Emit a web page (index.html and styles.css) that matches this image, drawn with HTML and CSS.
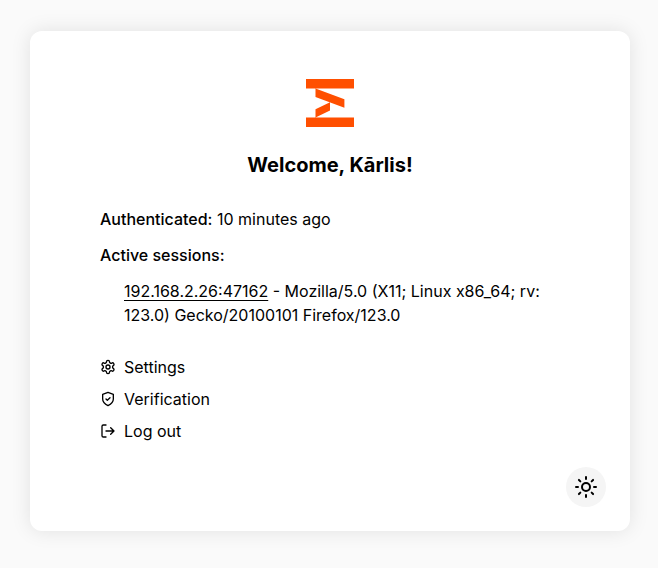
FILE: index.html
```html
<!DOCTYPE html>
<html lang="en">
<head>
<meta charset="utf-8">
<title>Welcome</title>
<link rel="stylesheet" href="styles.css">
</head>
<body>
<main class="card">
  <svg class="logo" viewBox="0 0 48 48" aria-hidden="true"><path d="M0 0H48V9.5H0ZM0 38.500H48V48H0ZM9.500 9.500L38.400 20.200V28.700L9.500 17.900ZM9.500 30.200L24 23.200V31.600L9.500 38.500Z"/></svg>
  <h1>Welcome, Kārlis!</h1>
  <section class="content">
    <p><strong>Authenticated:</strong> 10 minutes ago</p>
    <p><strong>Active sessions:</strong></p>
    <ul class="sessions"><li><a>192.168.2.26:47162</a> - Mozilla/5.0 (X11; Linux x86_64; rv:<br>123.0) Gecko/20100101 Firefox/123.0</li></ul>
    <nav class="links">
      <a><svg class="icon" viewBox="0 0 24 24"><path d="M12.220 2h-.440a2 2 0 0 0-2 2v.180a2 2 0 0 1-1 1.730l-.430.250a2 2 0 0 1-2 0l-.150-.080a2 2 0 0 0-2.730.730l-.220.380a2 2 0 0 0 .730 2.730l.150.100a2 2 0 0 1 1 1.720v.510a2 2 0 0 1-1 1.740l-.150.090a2 2 0 0 0-.730 2.730l.220.380a2 2 0 0 0 2.730.730l.150-.080a2 2 0 0 1 2 0l.430.250a2 2 0 0 1 1 1.730V20a2 2 0 0 0 2 2h.440a2 2 0 0 0 2-2v-.180a2 2 0 0 1 1-1.730l.430-.250a2 2 0 0 1 2 0l.150.080a2 2 0 0 0 2.730-.730l.220-.390a2 2 0 0 0-.730-2.730l-.150-.080a2 2 0 0 1-1-1.740v-.500a2 2 0 0 1 1-1.740l.150-.090a2 2 0 0 0 .730-2.730l-.220-.380a2 2 0 0 0-2.730-.730l-.150.080a2 2 0 0 1-2 0l-.430-.250a2 2 0 0 1-1-1.730V4a2 2 0 0 0-2-2z"/><circle cx="12" cy="12" r="3"/></svg>Settings</a>
      <a><svg class="icon" viewBox="0 0 24 24"><path d="M12 22s8-4 8-10V5l-8-3-8 3v7c0 6 8 10 8 10zM9 12l2 2 4-4"/></svg>Verification</a>
      <a><svg class="icon" viewBox="0 0 24 24"><path d="M9 21H5a2 2 0 0 1-2-2V5a2 2 0 0 1 2-2h4M16 17l5-5-5-5M21 12H9"/></svg>Log out</a>
    </nav>
  </section>
  <button class="theme" aria-label="Theme"><svg class="icon" viewBox="0 0 24 24"><circle cx="12" cy="12" r="4"/><path d="M12 2v2M12 20v2M4.930 4.930l1.410 1.410M17.660 17.660l1.410 1.410M2 12h2M20 12h2M6.340 17.660l-1.410 1.410M19.070 4.930l-1.410 1.410"/></svg></button>
</main>
</body>
</html>
```
FILE: styles.css
```css
* { box-sizing: border-box; margin: 0; padding: 0; }
body { background: #fafafa; color: #000; font: 16px/24px Inter, sans-serif; padding: 31px 28px 37px 30px; }
.card { position: relative; width: 600px; height: 500px; padding: 48px 70px; background: #fff; border-radius: 12px; box-shadow: 0 0 20px rgba(0, 0, 0, .1); }
.logo { display: block; width: 48px; height: 48px; margin: 0 auto 24px; fill: #ff4f00; }
h1 { font-size: 20px; line-height: 28px; font-weight: 700; text-align: center; margin-bottom: 28px; }
.content p { margin-bottom: 12px; }
strong { font-weight: 500; }
.sessions { list-style: none; padding-left: 24px; margin-bottom: 28px; }
.sessions a { text-decoration: underline 1px; text-underline-offset: 3px; }
.links { display: flex; flex-direction: column; gap: 8px; }
.links a { display: flex; align-items: center; gap: 8px; }
.icon { width: 16px; height: 16px; fill: none; stroke: currentColor; stroke-width: 2; stroke-linecap: round; stroke-linejoin: round; }
.theme { position: absolute; right: 24px; bottom: 24px; width: 40px; height: 40px; display: grid; place-items: center; border: 0; border-radius: 50%; background: #f5f5f5; color: #000; }
.theme .icon { width: 24px; height: 24px; }
```
